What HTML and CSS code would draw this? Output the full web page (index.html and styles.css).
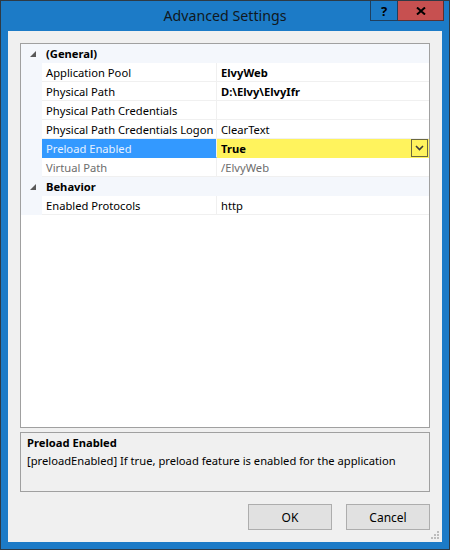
FILE: index.html
```html
<!DOCTYPE html>
<html lang="en">

<head>
    <meta charset="UTF-8">
    <meta name="viewport" content="width=device-width, initial-scale=1.0">
    <title>Advanced Settings</title>
    <link rel="stylesheet" href="styles.css">
</head>

<body>
    <div class="window">
        <div class="titlebar">
            <span></span>
            <span class="title">Advanced Settings</span>
            <div class="caption">
                <span class="help">?</span>
                <span class="close">
                    <svg width="10" height="8" viewBox="0 0 10 8">
                        <path d="M1 0.5 L9 7.5 M9 0.5 L1 7.5" stroke="#000" stroke-width="2"/>
                    </svg>
                </span>
            </div>
        </div>
        <div class="client">
            <div class="grid">
                <div class="cat">
                    <span class="toggle">
                        <svg width="6" height="6" viewBox="0 0 6 6"><polygon points="6,0 6,6 0,6" fill="#595959"/></svg>
                    </span>
                    <span class="cat-name">(General)</span>
                </div>
                <div class="row">
                    <span class="margin"></span>
                    <span class="name">Application Pool</span>
                    <span class="value bold">ElvyWeb</span>
                </div>
                <div class="row">
                    <span class="margin"></span>
                    <span class="name">Physical Path</span>
                    <span class="value bold">D:\Elvy\ElvyIfr</span>
                </div>
                <div class="row">
                    <span class="margin"></span>
                    <span class="name">Physical Path Credentials</span>
                    <span class="value"></span>
                </div>
                <div class="row">
                    <span class="margin"></span>
                    <span class="name">Physical Path Credentials Logon</span>
                    <span class="value">ClearText</span>
                </div>
                <div class="row selected">
                    <span class="margin"></span>
                    <span class="name">Preload Enabled</span>
                    <span class="value bold">
                        True
                        <span class="drop">
                            <svg width="9" height="6" viewBox="0 0 9 6"><path d="M1 1 L4.5 4.5 L8 1" stroke="#3c3c3c" stroke-width="1.6" fill="none"/></svg>
                        </span>
                    </span>
                </div>
                <div class="row readonly">
                    <span class="margin"></span>
                    <span class="name">Virtual Path</span>
                    <span class="value">/ElvyWeb</span>
                </div>
                <div class="cat">
                    <span class="toggle">
                        <svg width="6" height="6" viewBox="0 0 6 6"><polygon points="6,0 6,6 0,6" fill="#595959"/></svg>
                    </span>
                    <span class="cat-name">Behavior</span>
                </div>
                <div class="row">
                    <span class="margin"></span>
                    <span class="name">Enabled Protocols</span>
                    <span class="value">http</span>
                </div>
            </div>
            <div class="desc">
                <div class="desc-title">Preload Enabled</div>
                <div class="desc-text">[preloadEnabled] If true, preload feature is enabled for the application</div>
            </div>
            <div class="buttons">
                <span class="btn">OK</span>
                <span class="btn">Cancel</span>
            </div>
            <svg class="grip" width="9" height="9" viewBox="0 0 9 9" fill="#bcbcbc">
                <rect x="6" y="0" width="2" height="2"/>
                <rect x="3" y="3" width="2" height="2"/>
                <rect x="6" y="3" width="2" height="2"/>
                <rect x="0" y="6" width="2" height="2"/>
                <rect x="3" y="6" width="2" height="2"/>
                <rect x="6" y="6" width="2" height="2"/>
            </svg>
        </div>
    </div>
</body>

</html>
```

FILE: styles.css
```css
body {
    margin: 0;
    font-family: "Noto Sans", "Liberation Sans", sans-serif;
    font-size: 11.2px;
    color: #000;
}

.window {
    width: 450px;
    height: 550px;
    box-sizing: border-box;
    background-color: #1c7bc7;
    border: 1px solid #2e3a45;
    display: flex;
    flex-direction: column;
}

.titlebar {
    height: 30px;
    flex-shrink: 0;
    display: grid;
    grid-template-columns: 1fr auto 1fr;
}

.titlebar .title {
    align-self: center;
    font-size: 14.2px;
    color: #101820;
    margin-top: -1px;
}

.caption {
    justify-self: end;
    display: flex;
    margin-right: 5px;
    height: 20px;
}

.caption span {
    display: flex;
    align-items: center;
    justify-content: center;
    box-sizing: border-box;
    height: 20px;
}

.caption .help {
    width: 28px;
    border: 1px solid #1f3f5e;
    border-top: none;
    font-weight: bold;
    font-size: 13px;
}

.caption .close {
    width: 46px;
    background-color: #c75050;
    border: 1px solid #5b3030;
    border-top: none;
    border-left: none;
}

.client {
    flex: 1;
    margin: 0 7px 7px;
    background-color: #f0f0f0;
    padding: 12px;
    display: flex;
    flex-direction: column;
    position: relative;
}

.grid {
    flex: 1;
    background-color: #fff;
    border: 1px solid #a0a0a0;
}

.cat {
    height: 19px;
    background-color: #f4f7fc;
    display: flex;
    align-items: center;
    box-sizing: border-box;
}

.cat .toggle {
    width: 21px;
    display: flex;
    justify-content: center;
    padding-left: 2px;
    box-sizing: border-box;
}

.cat-name {
    font-weight: bold;
    padding-left: 4px;
}

.row {
    display: grid;
    grid-template-columns: 21px 175px 212px;
    height: 19px;
}

.row span.margin {
    background-color: #f4f7fc;
}

.row .name,
.row .value {
    box-sizing: border-box;
    border-bottom: 1px solid #f0f0f0;
    padding-top: 1px;
    line-height: 17px;
    white-space: nowrap;
    overflow: hidden;
}

.row .name {
    padding-left: 4px;
    border-right: 1px solid #f0f0f0;
}

.row .value {
    padding-left: 4px;
    display: flex;
    align-items: center;
    justify-content: space-between;
}

.bold {
    font-weight: bold;
}

.selected .name {
    background-color: #3399ff;
    color: #e6f1ff;
    border-bottom-color: #3399ff;
}

.selected .value {
    background-color: #fff35d;
    border-bottom-color: #fff35d;
    padding-top: 0;
}

.drop {
    width: 17px;
    height: 18px;
    box-sizing: border-box;
    border: 1px solid #6b6840;
    display: flex;
    align-items: center;
    justify-content: center;
    margin-right: 1px;
}

.readonly .name,
.readonly .value {
    color: #6d6d6d;
}

.desc {
    height: 60px;
    box-sizing: border-box;
    margin-top: 4px;
    border: 1px solid #a0a0a0;
    padding: 1px 6px;
}

.desc-title {
    font-weight: bold;
    line-height: 18px;
}

.desc-text {
    line-height: 18px;
}

.buttons {
    margin-top: 12px;
    display: flex;
    justify-content: flex-end;
    gap: 14px;
}

.btn {
    width: 84px;
    height: 26px;
    box-sizing: border-box;
    background-color: #e1e1e1;
    border: 1px solid #adadad;
    display: flex;
    align-items: center;
    justify-content: center;
    font-size: 12px;
}

.grip {
    position: absolute;
    right: 2px;
    bottom: 2px;
}
```
